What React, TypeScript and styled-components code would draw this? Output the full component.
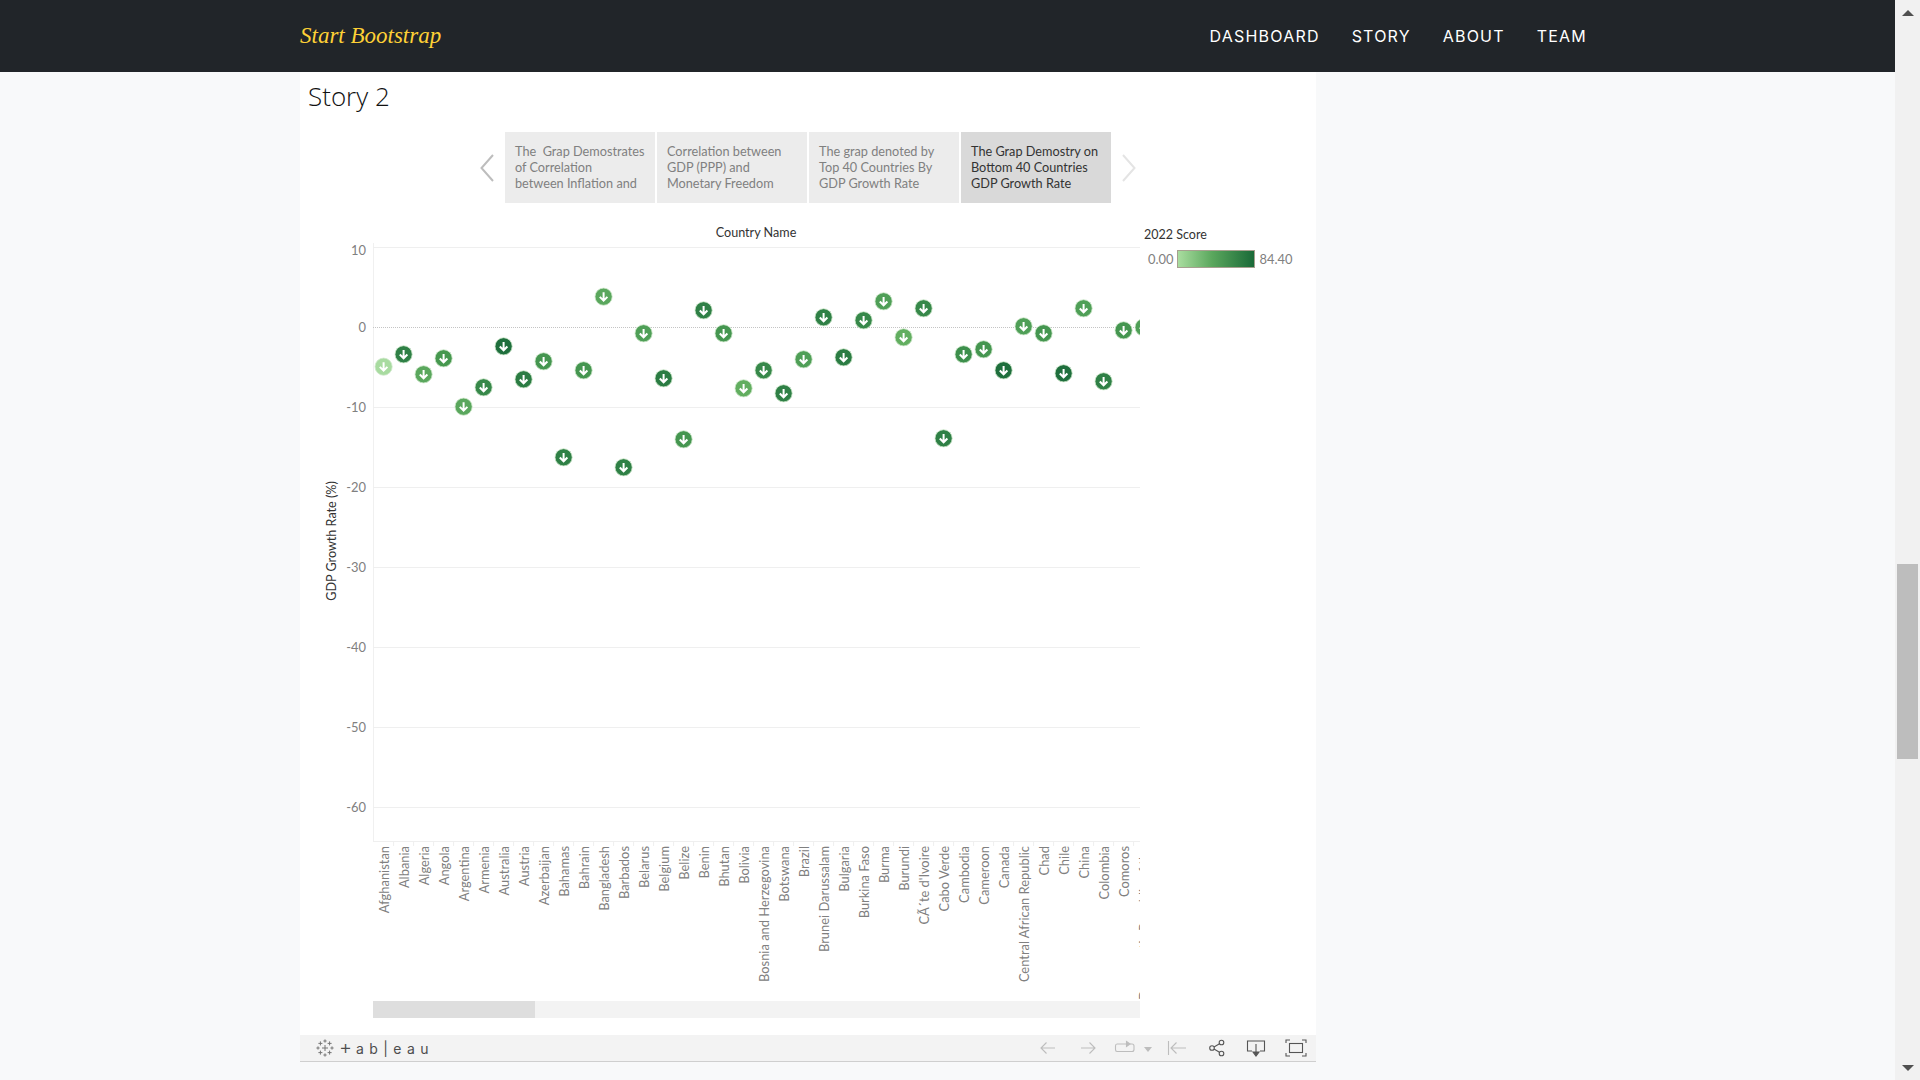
import React from "react";
import styled, { createGlobalStyle } from "styled-components";

const GlobalStyle = createGlobalStyle`
  html, body {
    margin: 0;
    height: 100%;
    overflow: hidden;
    background: #f8f9fa;
  }
`;

const Shell = styled.div`
  display: flex;
  height: 1080px;
  width: 1920px;
  overflow: hidden;
`;

const Main = styled.div`
  flex: 1;
  min-width: 0;
  display: flex;
  flex-direction: column;
`;

const NavBar = styled.nav`
  height: 72px;
  flex-shrink: 0;
  background: #212529;
  display: flex;
  align-items: center;
  justify-content: space-between;
  padding: 0 308px 0 300px;
`;

const Brand = styled.span`
  font-family: "Liberation Serif", serif;
  font-style: italic;
  font-size: 23px;
  color: #fed136;
`;

const NavLinks = styled.div`
  display: flex;
  gap: 32px;
`;

const NavLink = styled.a`
  font-family: "Inter", sans-serif;
  font-size: 16px;
  letter-spacing: 1.2px;
  color: #fff;
  text-transform: uppercase;
`;

const Card = styled.main`
  width: 1016px;
  margin-left: 300px;
  background: #fff;
  display: flex;
  flex-direction: column;
`;

const Title = styled.h2`
  margin: 7px 0 19px 8px;
  font-family: "Open Sans", sans-serif;
  font-weight: 300;
  font-size: 26px;
  line-height: 34px;
  color: #111;
`;

const TabRow = styled.div`
  display: flex;
  align-items: center;
  height: 71px;
  padding-left: 180px;
`;

const TabArrow = styled.svg<{ $faded?: boolean }>`
  width: 14px;
  height: 28px;
  fill: none;
  stroke: ${(p) => (p.$faded ? "#e4e4e4" : "#bdbdbd")};
  stroke-width: 2;
`;

const Tabs = styled.div`
  display: flex;
  gap: 2px;
  margin: 0 11px;
`;

const Tab = styled.div<{ $active?: boolean }>`
  width: 150px;
  height: 71px;
  box-sizing: border-box;
  padding: 11px 0 11px 10px;
  overflow: hidden;
  white-space: pre;
  background: ${(p) => (p.$active ? "#d9d9d9" : "#ececec")};
  color: ${(p) => (p.$active ? "#333" : "#808080")};
  font-family: "Lato", sans-serif;
  font-size: 12.7px;
  line-height: 16px;
`;

const ChartRow = styled.div`
  display: flex;
  height: 798px;
`;

const ChartSvg = styled.svg`
  width: 840px;
  height: 798px;
  flex-shrink: 0;
  display: block;
`;

const AxisText = styled.text`
  font-family: "Lato", sans-serif;
  font-size: 12.9px;
  fill: #808080;
`;

const AxisTitle = styled.text`
  font-family: "Lato", sans-serif;
  font-size: 12.6px;
  fill: #333;
`;

const Legend = styled.div`
  padding: 25px 0 0 4px;
  font-family: "Lato", sans-serif;
  font-size: 12.9px;
  color: #808080;
`;

const LegendTitle = styled.div`
  color: #333;
  font-size: 12.5px;
  line-height: 14px;
  margin-bottom: 8px;
`;

const LegendScale = styled.div`
  display: flex;
  align-items: center;
  gap: 4px;
  padding-left: 4px;
`;

const LegendBar = styled.div`
  width: 78px;
  height: 18px;
  box-sizing: border-box;
  border: 1px solid #a6a08f;
  background: linear-gradient(to right, #a9dd9f, #5aa75d 45%, #1a6a38);
`;

const HScrollTrack = styled.div`
  width: 767px;
  height: 17px;
  margin-left: 73px;
  background: #f3f3f3;
`;

const HScrollThumb = styled.div`
  width: 162px;
  height: 100%;
  background: #dedede;
`;

const Toolbar = styled.footer`
  height: 26px;
  margin-top: 17px;
  display: flex;
  align-items: center;
  background: #f3f3f3;
  border-bottom: 1px solid #cfcfcf;
`;

const LogoWrap = styled.div`
  display: flex;
  align-items: center;
  gap: 5px;
  margin-left: 16px;
  margin-right: auto;
`;

const LogoMark = styled.span`
  font-family: "Inter", sans-serif;
  font-size: 14px;
  line-height: 20px;
  letter-spacing: 5.4px;
  color: #4d4d4d;
`;

const LogoPlus = styled.span`
  font-size: 20px;
  font-weight: 300;
  letter-spacing: 4px;
`;

const ToolButton = styled.div<{ $w?: number }>`
  width: ${(p) => p.$w ?? 40}px;
  height: 26px;
  display: flex;
  align-items: center;
  justify-content: center;
  gap: 8px;
`;

const ToolIcon = styled.svg<{ $on?: boolean }>`
  width: 22px;
  height: 18px;
  fill: none;
  stroke: ${(p) => (p.$on ? "#555" : "#bdbdbd")};
  stroke-width: 1.1;
`;

const Caret = styled.span`
  width: 0;
  height: 0;
  margin-top: 2px;
  border-left: 4px solid transparent;
  border-right: 4px solid transparent;
  border-top: 5px solid #bdbdbd;
`;

const ScrollBar = styled.aside`
  width: 25px;
  flex-shrink: 0;
  background: #f1f1f1;
  display: flex;
  flex-direction: column;
  align-items: center;
`;

const ScrollButton = styled.div<{ $down?: boolean }>`
  height: 25px;
  display: flex;
  align-items: center;
  &::before {
    content: "";
    border-left: 6px solid transparent;
    border-right: 6px solid transparent;
    ${(p) => (p.$down ? "border-top" : "border-bottom")}: 6px solid #505050;
  }
`;

const ScrollSpace = styled.div<{ $h: number }>`
  height: ${(p) => p.$h}px;
`;

const ScrollThumb = styled.div`
  width: 21px;
  height: 195px;
  background: #bdbdbd;
`;

const DOTS: [string, number, string][] = [
  ["Afghanistan", 366.7, "#a8dba0"],
  ["Albania", 354.3, "#2f8046"],
  ["Algeria", 374.3, "#5aa75d"],
  ["Angola", 358.3, "#46984f"],
  ["Argentina", 406.7, "#5aa75d"],
  ["Armenia", 387.3, "#37884a"],
  ["Australia", 346.3, "#1f6f3d"],
  ["Austria", 379.3, "#2b7c43"],
  ["Azerbaijan", 361.3, "#459650"],
  ["Bahamas", 457.3, "#2f8046"],
  ["Bahrain", 370.3, "#459650"],
  ["Bangladesh", 296.7, "#5aa75d"],
  ["Barbados", 467.3, "#2f8046"],
  ["Belarus", 333.3, "#4f9f57"],
  ["Belgium", 378.3, "#2b7c43"],
  ["Belize", 439.3, "#459650"],
  ["Benin", 310.3, "#2f8046"],
  ["Bhutan", 333.3, "#459650"],
  ["Bolivia", 388.3, "#62ae60"],
  ["Bosnia and Herzegovina", 370.3, "#37884a"],
  ["Botswana", 393.3, "#2f8046"],
  ["Brazil", 359.3, "#4f9f57"],
  ["Brunei Darussalam", 317.3, "#2f8046"],
  ["Bulgaria", 357.3, "#2b7c43"],
  ["Burkina Faso", 320.3, "#37884a"],
  ["Burma", 301.3, "#4f9f57"],
  ["Burundi", 337.3, "#62ae60"],
  ["CÃ´te d'Ivoire", 308.3, "#37884a"],
  ["Cabo Verde", 438.3, "#2f8046"],
  ["Cambodia", 354.3, "#3d8f4c"],
  ["Cameroon", 349.3, "#459650"],
  ["Canada", 370.3, "#1f6f3d"],
  ["Central African Republic", 326.3, "#4f9f57"],
  ["Chad", 333.3, "#459650"],
  ["Chile", 373.3, "#1f6f3d"],
  ["China", 308.3, "#4f9f57"],
  ["Colombia", 381.3, "#2f8046"],
  ["Comoros", 330.3, "#459650"],
  ["Congo, Democratic Republic of the", 327.3, "#4f9f57"],
];

const TICKS = [10, 0, -10, -20, -30, -40, -50, -60];
const tickY = (v: number) => 327.5 - v * 8;

function Chart() {
  return (
    <ChartSvg viewBox="300 203 840 798">
      <defs>
        <clipPath id="pane">
          <rect x="373" y="203" width="767" height="798" />
        </clipPath>
      </defs>
      <AxisTitle x="756" y="237" textAnchor="middle">Country Name</AxisTitle>
      <AxisTitle transform="rotate(-90 336 541)" x="336" y="541" textAnchor="middle">
        GDP Growth Rate (%)
      </AxisTitle>
      <line x1="373.5" y1="243" x2="373.5" y2="842" stroke="#f0f0f0" />
      {TICKS.map((v) => (
        <g key={v}>
          <line
            x1="373"
            x2="1140"
            y1={tickY(v)}
            y2={tickY(v)}
            stroke={v === 0 ? "#c4c4c4" : "#efefef"}
            strokeDasharray={v === 0 ? "1 1" : undefined}
          />
          <AxisText x="366" y={tickY(v) + (v === 10 ? 7 : 4)} textAnchor="end">{v}</AxisText>
        </g>
      ))}
      <line x1="373" x2="1140" y1="841.5" y2="841.5" stroke="#efefef" />
      <g clipPath="url(#pane)">
        {DOTS.map(([name, y, color], i) => {
          const x = 383.6 + i * 20;
          return (
            <g key={name}>
              <line x1={x + 10} x2={x + 10} y1="842" y2="846" stroke="#efefef" />
              <AxisText transform={`rotate(-90 ${x + 5} 846)`} x={x + 5} y="846" textAnchor="end">
                {name}
              </AxisText>
              <circle cx={x} cy={y} r="8.6" fill={color} stroke="#cfe8cb" strokeWidth="0.8" />
              <path
                d={`M${x} ${y - 4.4}V${y + 4}M${x - 3.8} ${y + 0.2}L${x} ${y + 4}L${x + 3.8} ${y + 0.2}`}
                fill="none"
                stroke="#fff"
                strokeWidth="2"
              />
            </g>
          );
        })}
      </g>
    </ChartSvg>
  );
}

function TableauLogo() {
  const crosses: [number, number, number][] = [
    [9, 9, 3], [9, 2, 1.6], [9, 16, 1.6], [2, 9, 1.6], [16, 9, 1.6],
    [4.4, 4.4, 2], [13.6, 4.4, 2], [4.4, 13.6, 2], [13.6, 13.6, 2],
  ];
  return (
    <svg width="18" height="18" viewBox="0 0 18 18" stroke="#777" strokeWidth="1" fill="none">
      {crosses.map(([x, y, r]) => (
        <path key={`${x}-${y}`} d={`M${x - r} ${y}H${x + r}M${x} ${y - r}V${y + r}`} />
      ))}
    </svg>
  );
}

export default function App() {
  return (
    <Shell>
      <GlobalStyle />
      <Main>
        <NavBar>
          <Brand>Start Bootstrap</Brand>
          <NavLinks>
            <NavLink>Dashboard</NavLink>
            <NavLink>Story</NavLink>
            <NavLink>About</NavLink>
            <NavLink>Team</NavLink>
          </NavLinks>
        </NavBar>
        <Card>
          <Title>Story 2</Title>
          <TabRow>
            <TabArrow viewBox="0 0 14 28">
              <path d="M13 1L1.5 14L13 27" />
            </TabArrow>
            <Tabs>
              <Tab>{"The  Grap Demostrates\nof Correlation\nbetween Inflation and"}</Tab>
              <Tab>{"Correlation between\nGDP (PPP) and\nMonetary Freedom"}</Tab>
              <Tab>{"The grap denoted by\nTop 40 Countries By\nGDP Growth Rate"}</Tab>
              <Tab $active>{"The Grap Demostry on\nBottom 40 Countries\nGDP Growth Rate"}</Tab>
            </Tabs>
            <TabArrow $faded viewBox="0 0 14 28">
              <path d="M1 1L12.5 14L1 27" />
            </TabArrow>
          </TabRow>
          <ChartRow>
            <Chart />
            <Legend>
              <LegendTitle>2022 Score</LegendTitle>
              <LegendScale>
                <span>0.00</span>
                <LegendBar />
                <span>84.40</span>
              </LegendScale>
            </Legend>
          </ChartRow>
          <HScrollTrack>
            <HScrollThumb />
          </HScrollTrack>
          <Toolbar>
            <LogoWrap>
              <TableauLogo />
              <LogoMark>
                <LogoPlus>+</LogoPlus>ab|eau
              </LogoMark>
            </LogoWrap>
            <ToolButton>
              <ToolIcon viewBox="0 0 22 18"><path d="M18 9H4M9.5 3.5L4 9L9.5 14.5" /></ToolIcon>
            </ToolButton>
            <ToolButton>
              <ToolIcon viewBox="0 0 22 18"><path d="M4 9H18M12.5 3.5L18 9L12.5 14.5" /></ToolIcon>
            </ToolButton>
            <ToolButton $w={49}>
              <ToolIcon viewBox="0 0 22 18">
                <path d="M12 5H3Q1.5 5 1.5 7V10.5Q1.5 12.5 3 12.5H18Q20 12.5 20 10.5V7Q20 5 18 5H16" />
                <path d="M12.5 2.5L16 5L12.5 7.5Z" fill="#bdbdbd" />
              </ToolIcon>
              <Caret />
            </ToolButton>
            <ToolButton>
              <ToolIcon viewBox="0 0 22 18"><path d="M2.5 2V16M20 9H5M10.5 3.5L5 9L10.5 14.5" /></ToolIcon>
            </ToolButton>
            <ToolButton $w={39}>
              <ToolIcon $on viewBox="0 0 22 18">
                <circle cx="6" cy="9" r="2.3" />
                <circle cx="15.5" cy="3.5" r="2.3" />
                <circle cx="15.5" cy="14.5" r="2.3" />
                <path d="M8 7.9L13.5 4.7M8 10.1L13.5 13.3" />
              </ToolIcon>
            </ToolButton>
            <ToolButton>
              <ToolIcon $on viewBox="0 0 22 18">
                <path d="M7 12H2.5V2H19.5V12H15" />
                <path d="M11 5V15" />
                <path d="M8 13H14L11 17Z" fill="#555" />
              </ToolIcon>
            </ToolButton>
            <ToolButton>
              <ToolIcon $on viewBox="0 0 22 18">
                <rect x="4.5" y="4.5" width="13" height="9" />
                <path d="M1 4V1H5M17 1H21V4M21 14V17H17M5 17H1V14" />
              </ToolIcon>
            </ToolButton>
          </Toolbar>
        </Card>
      </Main>
      <ScrollBar>
        <ScrollButton />
        <ScrollSpace $h={539} />
        <ScrollThumb />
        <ScrollSpace $h={296} />
        <ScrollButton $down />
      </ScrollBar>
    </Shell>
  );
}
